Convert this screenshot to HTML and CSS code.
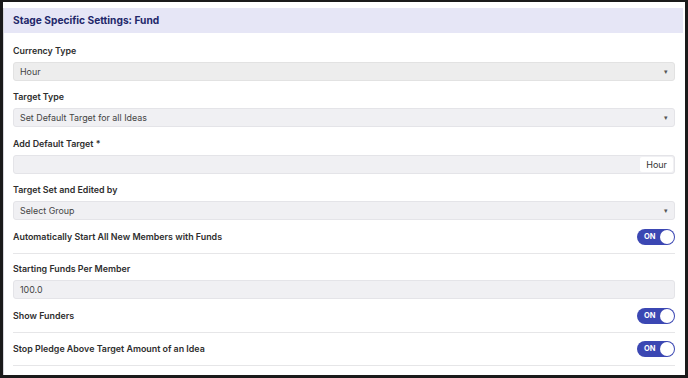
FILE: index.html
```html
<!DOCTYPE html>
<html>
<head>
<meta charset="utf-8">
<link rel="stylesheet" href="styles.css">
</head>
<body>
<div class="frame">
  <div class="panel">
    <div class="panel-header">Stage Specific Settings: Fund</div>
    <div class="form">
      <div class="field">
        <div class="label">Currency Type</div>
        <div class="select select-gray"><span>Hour</span><span class="caret">&#9662;</span></div>
      </div>
      <div class="field">
        <div class="label">Target Type</div>
        <div class="select"><span>Set Default Target for all Ideas</span><span class="caret">&#9662;</span></div>
      </div>
      <div class="field field-wide">
        <div class="label">Add Default Target *</div>
        <div class="select input-group"><span></span><span class="addon">Hour</span></div>
      </div>
      <div class="field">
        <div class="label">Target Set and Edited by</div>
        <div class="select"><span>Select Group</span><span class="caret">&#9662;</span></div>
      </div>
      <div class="toggle-row">
        <div class="label">Automatically Start All New Members with Funds</div>
        <div class="toggle"><span class="toggle-text">ON</span><span class="knob"></span></div>
      </div>
      <div class="field">
        <div class="label">Starting Funds Per Member</div>
        <div class="select"><span>100.0</span></div>
      </div>
      <div class="toggle-row">
        <div class="label">Show Funders</div>
        <div class="toggle"><span class="toggle-text">ON</span><span class="knob"></span></div>
      </div>
      <div class="toggle-row">
        <div class="label">Stop Pledge Above Target Amount of an Idea</div>
        <div class="toggle"><span class="toggle-text">ON</span><span class="knob"></span></div>
      </div>
    </div>
  </div>
</div>
</body>
</html>
```
FILE: styles.css
```css
* { box-sizing: border-box; }
html, body { margin: 0; padding: 0; background: #fff; }
body { font-family: Inter, "Noto Sans", sans-serif; }

.frame {
  width: 688px;
  height: 378px;
  border-style: solid;
  border-color: #1a1a1a;
  border-width: 2px 3px 3px 3px;
  padding-top: 6px;
  overflow: hidden;
  background: #fff;
}

.panel {
  margin-right: 2px;
  border-left: 1px solid #d6d6dc;
  height: 100%;
}

.panel-header {
  height: 25px;
  background: #e6e6f6;
  color: #23286a;
  font-weight: 700;
  font-size: 10.2px;
  line-height: 25px;
  padding-left: 9px;
}

.form {
  padding: 2px 8px 0 9px;
}

.field { margin-top: 9px; }
.field-wide { margin-top: 10px; }
.toggle-row + .field { margin-top: 8px; }

.label {
  font-size: 8.9px;
  font-weight: 600;
  color: #2e2e2e;
  line-height: 14px;
}
.field .label { margin-bottom: 4px; }

.select {
  height: 19px;
  border: 1px solid #e4e4e8;
  border-radius: 3px;
  background: #f0f0f3;
  display: flex;
  align-items: center;
  justify-content: space-between;
  padding: 0 6px 0 6px;
  font-size: 8.9px;
  color: #444;
}
.select-gray { background: #ededed; border-color: #e2e2e2; }

.caret {
  font-size: 7px;
  color: #555;
}

.input-group { padding-right: 1px; }
.addon {
  background: #fff;
  height: 15px;
  line-height: 15px;
  padding: 0 6px;
  border-radius: 2px;
  font-size: 9px;
  color: #333;
}

.toggle-row {
  display: flex;
  align-items: center;
  justify-content: space-between;
  padding: 8px 0;
  border-bottom: 1px solid #e6e6e8;
}
.field + .toggle-row { padding-top: 9px; }

.toggle {
  width: 38px;
  height: 16px;
  border-radius: 8px;
  background: #3b47b3;
  display: flex;
  align-items: center;
  justify-content: space-between;
  padding: 0 1px 0 7px;
}
.toggle-text {
  color: #fff;
  font-size: 7.5px;
  font-weight: 700;
  line-height: 1;
}
.knob {
  width: 14px;
  height: 14px;
  border-radius: 50%;
  background: #fff;
}
```
